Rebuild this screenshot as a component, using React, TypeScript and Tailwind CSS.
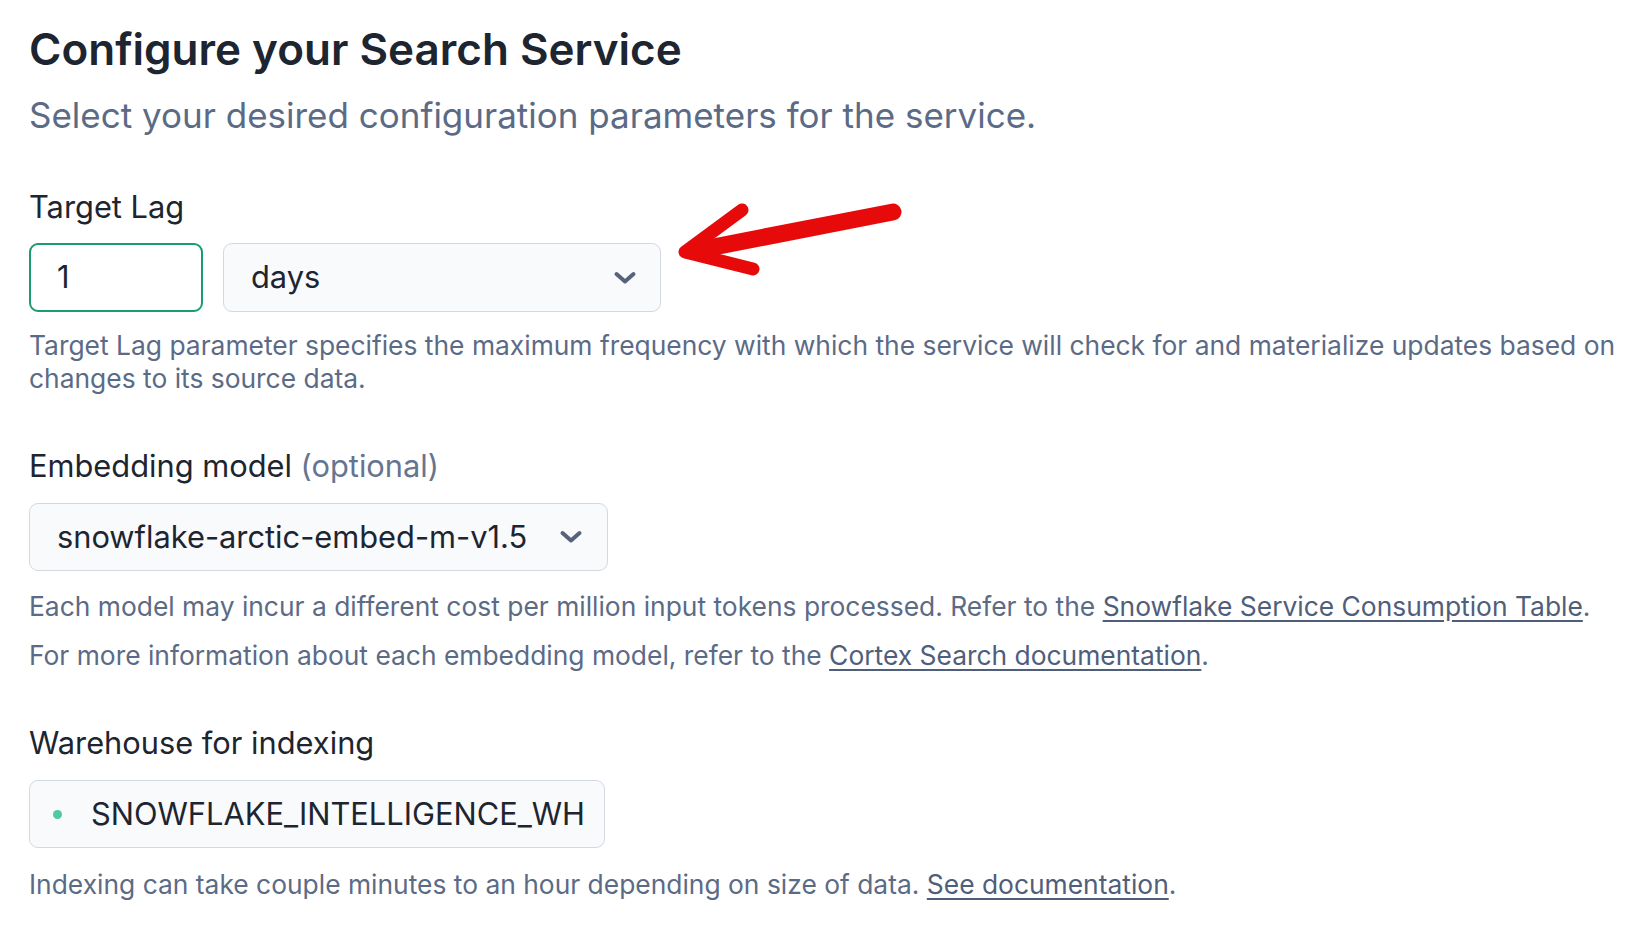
import React from "react";

const Chevron = () => (
  <svg width="24" height="14" viewBox="0 0 24 14" fill="none">
    <path d="M3.5 3 L12 10.5 L20.5 3" stroke="#56637b" strokeWidth="4" strokeLinecap="round" strokeLinejoin="round" />
  </svg>
);

export default function App() {
  return (
    <div className="relative min-h-screen bg-white font-['Inter','Liberation_Sans',sans-serif] pl-[29px] pt-[25px]">
      <h1 className="text-[44px] leading-[48px] font-semibold text-[#1d2530]">Configure your Search Service</h1>
      <p className="mt-[22px] text-[35px] leading-[40px] text-[#5b6b86]">
        Select your desired configuration parameters for the service.
      </p>

      <div className="mt-[54px] text-[30.8px] leading-[36px] text-[#1d2530]">Target Lag</div>
      <div className="mt-[18px] flex gap-[20px]">
        <div className="w-[174px] h-[69px] rounded-[9px] border-2 border-[#1a9b72] bg-white flex items-center pl-[26px] text-[30.8px] text-[#1d2530]">
          1
        </div>
        <div className="w-[438px] h-[69px] rounded-[9px] border-[1.5px] border-[#d3d8e3] bg-[#f9fafb] flex items-center justify-between pl-[27px] pr-[23px] text-[30.8px] text-[#1d2530]">
          <span>days</span>
          <Chevron />
        </div>
      </div>
      <p className="mt-[17px] whitespace-nowrap text-[26.4px] leading-[33px] text-[#5b6b86]">
        Target Lag parameter specifies the maximum frequency with which the service will check for and materialize updates based on
        <br />
        changes to its source data.
      </p>

      <div className="mt-[53px] text-[30.8px] leading-[36px] text-[#1d2530]">
        Embedding model <span className="text-[#66758f]">(optional)</span>
      </div>
      <div className="mt-[19px] w-[579px] h-[68px] rounded-[9px] border-[1.5px] border-[#d3d8e3] bg-[#f9fafb] flex items-center justify-between pl-[27px] pr-[24px] text-[30.8px] text-[#1d2530]">
        <span>snowflake-arctic-embed-m-v1.5</span>
        <Chevron />
      </div>
      <p className="mt-[19px] whitespace-nowrap text-[26.4px] leading-[33px] text-[#5b6b86]">
        Each model may incur a different cost per million input tokens processed. Refer to the{" "}
        <a className="underline underline-offset-[4px] text-[#4f5e7a]">Snowflake Service Consumption Table</a>.
      </p>
      <p className="mt-[16px] whitespace-nowrap text-[26.4px] leading-[33px] text-[#5b6b86]">
        For more information about each embedding model, refer to the{" "}
        <a className="underline underline-offset-[4px] text-[#4f5e7a]">Cortex Search documentation</a>.
      </p>

      <div className="mt-[53px] text-[30.8px] leading-[36px] text-[#1d2530]">Warehouse for indexing</div>
      <div className="mt-[19px] w-[576px] h-[68px] rounded-[9px] border-[1.5px] border-[#d3d8e3] bg-[#f9fafb] flex items-center pl-[23px] text-[30.8px] text-[#1d2530]">
        <span className="w-[9px] h-[9px] rounded-full bg-[#4ccb9e]" />
        <span className="ml-[29px]">SNOWFLAKE_INTELLIGENCE_WH</span>
      </div>
      <p className="mt-[20px] whitespace-nowrap text-[26.4px] leading-[33px] text-[#5b6b86]">
        Indexing can take couple minutes to an hour depending on size of data.{" "}
        <a className="underline underline-offset-[4px] text-[#4f5e7a]">See documentation</a>.
      </p>

      <svg className="absolute left-[670px] top-[195px]" width="240" height="90" viewBox="0 0 240 90" fill="none">
        <line x1="223" y1="17" x2="28" y2="55" stroke="#e60a0a" strokeWidth="17" strokeLinecap="round" />
        <polyline points="72,15 15,57 83,74" stroke="#e60a0a" strokeWidth="13" strokeLinecap="round" strokeLinejoin="round" />
      </svg>
    </div>
  );
}
